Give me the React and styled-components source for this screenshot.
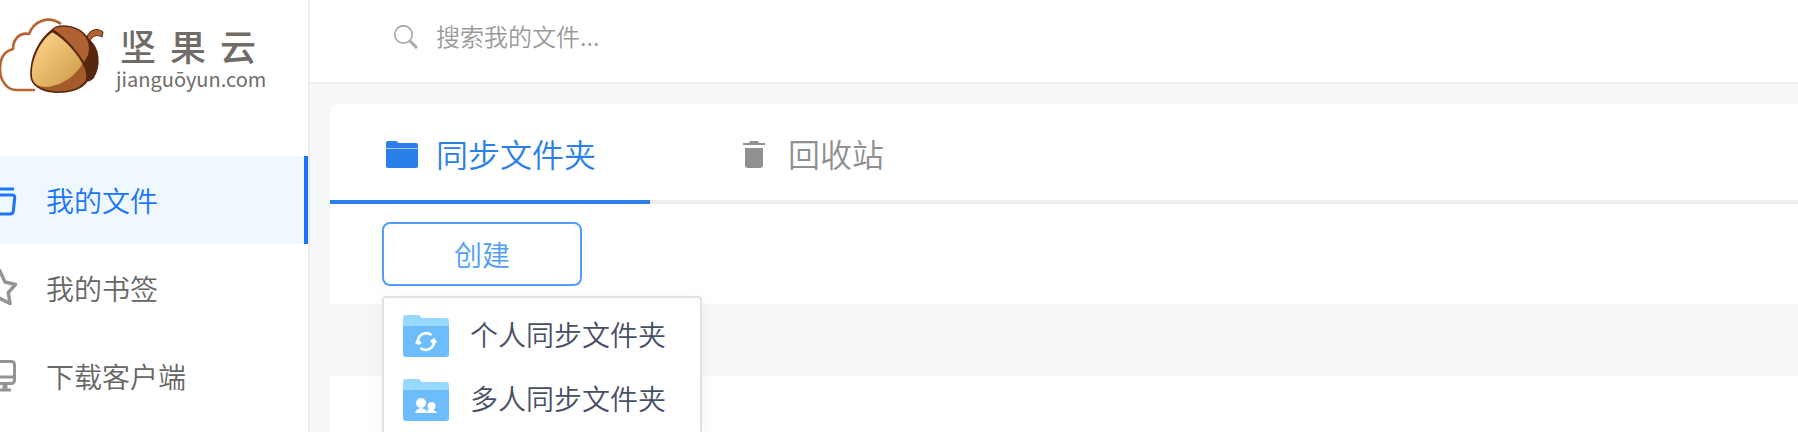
import styled, { createGlobalStyle } from 'styled-components';

const GlobalStyle = createGlobalStyle`
  * {
    box-sizing: border-box;
  }
  body {
    margin: 0;
    background: #f5f7f9;
    font-family: "Noto Sans CJK SC", sans-serif;
    font-weight: 350;
  }
  button, input {
    font: inherit;
  }
`;

function AcornLogo() {
  return (
    <svg width="106" height="96" viewBox="0 0 106 96" aria-hidden="true">
      <defs>
        <linearGradient id="nut" x1="0" y1="0" x2="1" y2="1">
          <stop offset="0.1" stopColor="#fdd28a" />
          <stop offset="0.8" stopColor="#d5a552" />
        </linearGradient>
      </defs>
      <path d="M35 90H17C7 90 0 81 0 69C0 58 5 51 13 49C13 39 20 32 29 34C34 21 48 15 61 24" fill="none" stroke="#b8632f" strokeWidth="2.6" strokeLinejoin="round" />
      <path d="M52 30C58 24 74 25 83 33C86 36 88 38 89 40C99 48 101 65 93 78C91 80 89 81 87 81C82 90 66 93 54 92C42 91 31 85 31 76C30 57 40 39 52 30Z" fill="#57260f" stroke="#57260f" strokeWidth="1.5" />
      <path d="M53 29C60 25 74 26 82 33C91 42 91 53 84 62C77 50 66 38 53 29Z" fill="#b06233" />
      <path d="M53 32C66 39 79 54 85 67C89 76 87 81 80 86C70 93 42 95 33 81C28 63 41 38 53 32Z" fill="#a35c29" />
      <path d="M53 32C65 38 77 51 83 62C79 72 65 85 47 87C38 87 33 84 32 76C31 58 42 39 53 32Z" fill="url(#nut)" />
      <path d="M52 31C66 39 79 54 85 67C88 74 88 78 86 82" fill="none" stroke="#57260f" strokeWidth="1.6" />
      <path d="M90 41C92 36 97 34 102 37L103 32C97 27 89 30 87 37Z" fill="#b06233" stroke="#57260f" strokeWidth="1" />
    </svg>
  );
}

function BoxIcon() {
  return (
    <svg width="18" height="32" viewBox="0 0 18 32" fill="none" stroke="currentColor" strokeWidth="3" aria-hidden="true">
      <path d="M-4 5H14" />
      <path d="M-4 11H12Q15 11 14.700 14L13.300 27Q13 30 10 30H-4" />
    </svg>
  );
}

function StarIcon() {
  return (
    <svg width="18" height="38" viewBox="0 0 18 38" fill="none" stroke="currentColor" strokeWidth="3.400" aria-hidden="true">
      <path d="M-1 0L5 13L15.500 15.500L8.300 23.500L10 34.500L-1 29" strokeLinejoin="round" />
    </svg>
  );
}

function MonitorIcon() {
  return (
    <svg width="18" height="32" viewBox="0 0 18 32" fill="none" stroke="currentColor" strokeWidth="3" aria-hidden="true">
      <path d="M-4 1.500H11Q14.500 1.500 14.500 5V20Q14.500 23.500 11 23.500H-4M-4 17H14M-2 30H11" />
      <path d="M5 24V29" strokeWidth="5" />
    </svg>
  );
}

function TabFolderIcon() {
  return (
    <svg width="32" height="28" viewBox="0 0 32 28" fill="currentColor" aria-hidden="true">
      <path d="M0 2Q0 0 2 0H10L13 2H30Q32 2 32 4V7H0Z" />
      <path d="M0 6H32V8H0Z" opacity="0.4" />
      <path d="M0 8H32V25Q32 27 30 27H2Q0 27 0 25Z" />
    </svg>
  );
}

function TrashIcon() {
  return (
    <svg width="24" height="28" viewBox="0 0 24 28" fill="currentColor" aria-hidden="true">
      <path d="M1 2H6.500L8.500 0H15.500L17.500 2H23V4H1Z" />
      <path d="M3 7H21V24Q21 27 18 27H6Q3 27 3 24Z" />
    </svg>
  );
}

function FolderIcon({ children }) {
  return (
    <svg width="46" height="42" viewBox="0 0 46 42" aria-hidden="true">
      <path d="M0 3Q0 0 3 0H15Q17 0 18 2L19 3H43Q46 3 46 6V14H0Z" fill="#99d8fe" />
      <path d="M0 11H46V39Q46 42 43 42H3Q0 42 0 39Z" fill="#6dbdfc" />
      {children}
    </svg>
  );
}

function SyncMark() {
  return (
    <g>
      <path d="M15 25A8.500 8.500 0 0 1 28.500 20M31 28A8.500 8.500 0 0 1 17.500 33" fill="none" stroke="#fff" strokeWidth="2.600" />
      <path d="M12 28L14.500 23.500L19 28L15.500 30ZM27 26L31 23L34 26.500L31 30Z" fill="#fff" />
    </g>
  );
}

function PeopleMark() {
  return (
    <g fill="#fff">
      <circle cx="18" cy="24" r="5" />
      <circle cx="28.500" cy="27" r="4" />
      <path d="M12 34Q13 30 18 29Q23 30 25 34ZM24 31Q28 29 31 31Q33 32 34 34H25Z" />
    </g>
  );
}

const navItems = [
  { label: '我的文件', icon: <BoxIcon />, active: true },
  { label: '我的书签', icon: <StarIcon /> },
  { label: '下载客户端', icon: <MonitorIcon /> },
];

const createOptions = [
  { label: '个人同步文件夹', mark: <SyncMark /> },
  { label: '多人同步文件夹', mark: <PeopleMark /> },
];

function App() {
  return (
    <>
      <GlobalStyle />
      <Page>
        <Sidebar>
          <Brand href="#">
            <AcornLogo />
            <BrandText>
              <BrandName>
                <span>坚</span>
                <span>果</span>
                <span>云</span>
              </BrandName>
              <BrandDomain>jianguōyun.com</BrandDomain>
            </BrandText>
          </Brand>
          <nav>
            {navItems.map((item) => (
              <NavItem key={item.label} href="#" $active={item.active}>
                <NavIcon $active={item.active}>{item.icon}</NavIcon>
                {item.label}
              </NavItem>
            ))}
          </nav>
        </Sidebar>
        <Main>
          <SearchBar>
            <svg width="24" height="24" viewBox="0 0 24 24" fill="none" stroke="#aaa" aria-hidden="true">
              <circle cx="9.500" cy="9.500" r="8.700" strokeWidth="1.700" />
              <path d="M16 16L23 23" strokeWidth="3" />
            </svg>
            <SearchInput type="text" aria-label="搜索我的文件" placeholder="搜索我的文件..." />
          </SearchBar>
          <Panel>
            <Tabs role="tablist">
              <Tab role="tab" aria-selected="true" $active>
                <TabFolderIcon />
                <Label>同步文件夹</Label>
              </Tab>
              <Tab role="tab" aria-selected="false">
                <TrashIcon />
                <Label>回收站</Label>
              </Tab>
            </Tabs>
            <Toolbar>
              <CreateWrapper>
                <CreateButton>创建</CreateButton>
                <Menu role="menu">
                  {createOptions.map((option) => (
                    <MenuItem key={option.label} role="menuitem">
                      <FolderIcon>{option.mark}</FolderIcon>
                      <Label>{option.label}</Label>
                    </MenuItem>
                  ))}
                </Menu>
              </CreateWrapper>
            </Toolbar>
            <ListHeader />
          </Panel>
        </Main>
      </Page>
    </>
  );
}

const Page = styled.div`
  display: flex;
  height: 100vh;
  overflow: hidden;
`;

const Sidebar = styled.aside`
  flex: 0 0 310px;
  background: #fff;
  border-right: 2px solid #ededed;
`;

const Brand = styled.a`
  display: flex;
  align-items: flex-start;
  gap: 10px;
  height: 156px;
  color: #716b67;
  text-decoration: none;
`;

const BrandText = styled.div`
  padding-top: 24px;
`;

const BrandName = styled.div`
  display: flex;
  gap: 14px;
  padding-left: 4px;
  font-size: 36px;
  line-height: 42px;
  font-weight: 500;
`;

const BrandDomain = styled.div`
  font-size: 20px;
  line-height: 26px;
  font-weight: 400;
`;

const NavItem = styled.a`
  display: flex;
  align-items: center;
  gap: 28px;
  height: 88px;
  font-size: 28px;
  text-decoration: none;
  color: ${(props) => (props.$active ? '#1a75fc' : '#666')};
  background: ${(props) => (props.$active ? '#f0f8ff' : 'transparent')};
  border-right: 4px solid ${(props) => (props.$active ? '#1a75fc' : 'transparent')};
`;

const NavIcon = styled.span`
  display: flex;
  color: ${(props) => (props.$active ? '#1a75fc' : '#949494')};
`;

const Main = styled.main`
  flex: 1;
  min-width: 0;
  display: flex;
  flex-direction: column;
`;

const SearchBar = styled.label`
  display: flex;
  align-items: center;
  gap: 18px;
  padding: 18px 84px 26px;
  background: #fff;
  border-bottom: 2px solid #ededed;
`;

const SearchInput = styled.input`
  flex: 1;
  height: 38px;
  padding: 0 0 4px;
  border: 0;
  outline: none;
  background: transparent;
  font-size: 24px;
  color: #666;
  &::placeholder {
    color: #9a9a9a;
    opacity: 1;
  }
`;

const Panel = styled.section`
  flex: 1;
  margin: 20px 0 0 20px;
  background: #fff;
  border-top-left-radius: 10px;
`;

const Tabs = styled.div`
  display: flex;
  border-bottom: 4px solid #ededed;
`;

const Tab = styled.button`
  display: flex;
  align-items: center;
  gap: ${(props) => (props.$active ? '18px' : '22px')};
  width: 320px;
  height: 100px;
  margin-bottom: -4px;
  padding: 6px 0 0 ${(props) => (props.$active ? '56px' : '92px')};
  border: 0;
  border-bottom: 4px solid ${(props) => (props.$active ? '#2a80e8' : 'transparent')};
  background: transparent;
  font-size: 32px;
  line-height: 40px;
  color: ${(props) => (props.$active ? '#2a80e8' : '#909090')};
  cursor: pointer;
`;

const Label = styled.span`
  padding-bottom: 4px;
`;

const Toolbar = styled.div`
  padding: 18px 52px;
`;

const CreateWrapper = styled.div`
  position: relative;
  width: fit-content;
`;

const CreateButton = styled.button`
  display: block;
  width: 200px;
  height: 64px;
  border: 2px solid #509dfb;
  border-radius: 8px;
  background: #fff;
  color: #509dfb;
  font-size: 28px;
  line-height: 1;
  cursor: pointer;
`;

const Menu = styled.div`
  position: absolute;
  top: calc(100% + 10px);
  left: 0;
  width: 320px;
  padding: 6px 0;
  background: #fff;
  border: 2px solid #e0e0e0;
  border-radius: 4px;
  box-shadow: 0 4px 20px rgba(0, 0, 0, 0.05);
`;

const MenuItem = styled.button`
  display: flex;
  align-items: center;
  gap: 21px;
  width: 100%;
  height: 64px;
  padding: 0 19px;
  border: 0;
  background: transparent;
  color: #475064;
  font-size: 28px;
  white-space: nowrap;
  cursor: pointer;
`;

const ListHeader = styled.div`
  height: 72px;
  background: #f7f7f7;
`;

export default App;
